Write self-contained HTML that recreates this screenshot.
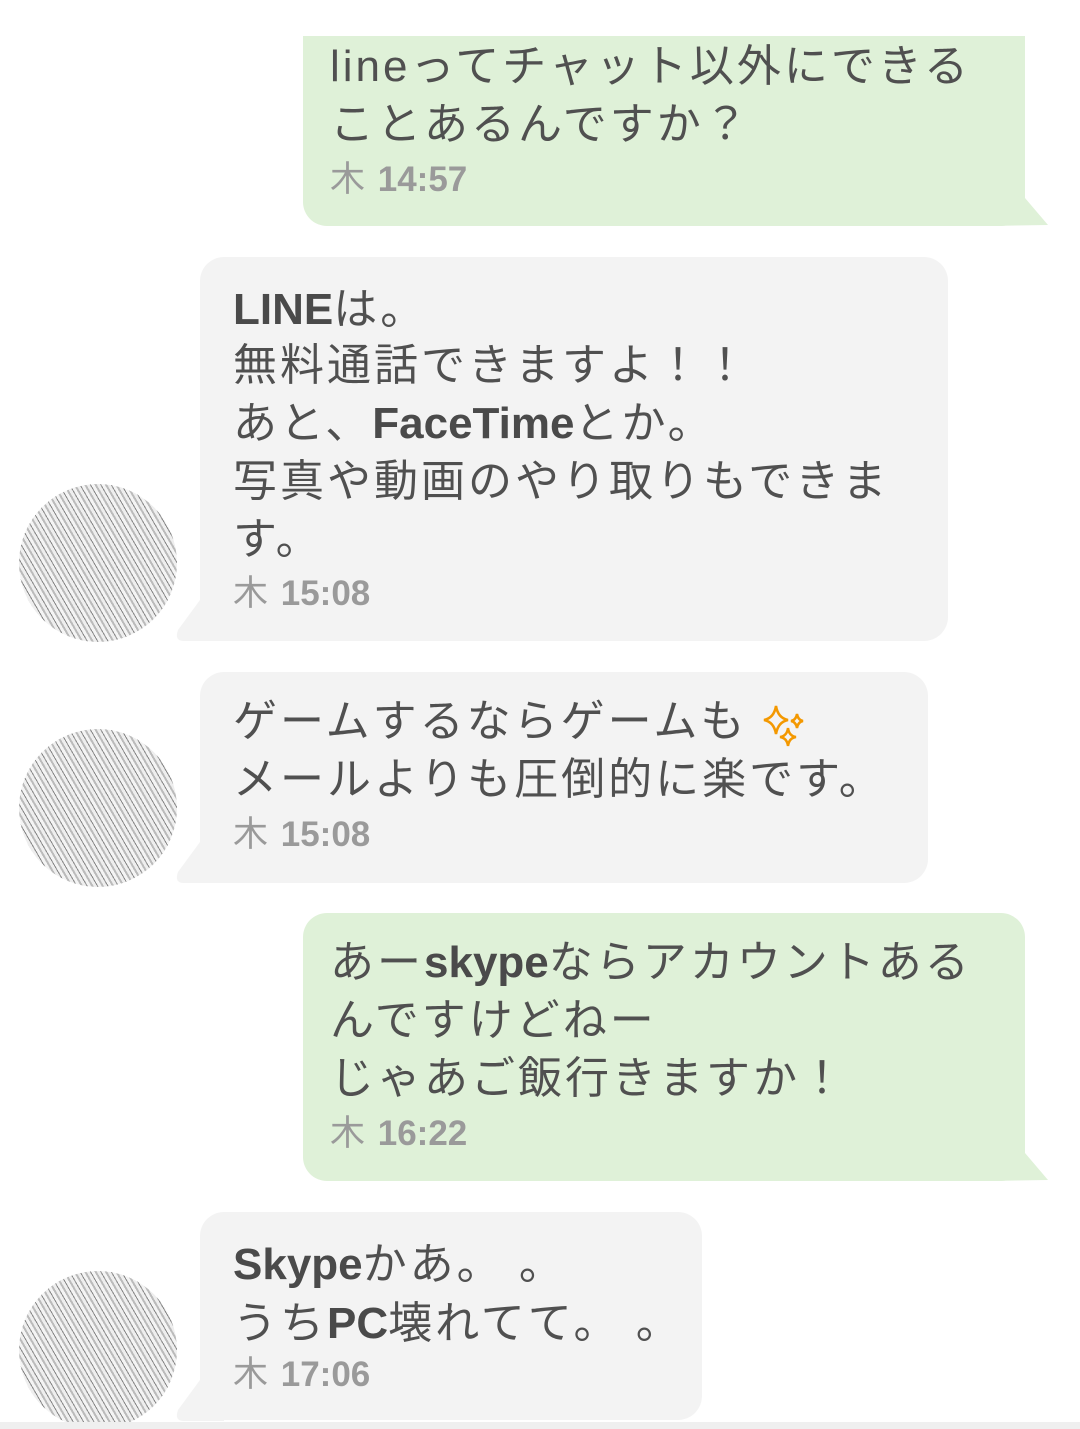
<!DOCTYPE html>
<html><head><meta charset="utf-8"><style>
body{margin:0;width:1080px;height:1429px;background:#fff;position:relative;overflow:hidden;font-family:"Liberation Sans","Noto Sans CJK JP",sans-serif;}
.b{position:absolute;}
.g{background:#dff1d8;border-radius:24px;}
.w{background:#f3f3f3;border-radius:24px;}
.t{position:absolute;font-size:44px;color:#505050;letter-spacing:3px;white-space:nowrap;line-height:58px;}
.t b{letter-spacing:0;color:#4a4a4a}
.tm{position:absolute;font-size:35px;color:#9a9a9a;white-space:nowrap;line-height:40px;font-weight:bold;}
.tm span{font-weight:normal;margin-right:3px}
.av{position:absolute;width:158px;height:158px;border-radius:50%;
background:repeating-linear-gradient(60deg,#bbb 0 2px,#eee 2px 5px,#888 5px 6px,#f4f4f4 6px 9px);}
</style></head><body>
<!-- bubble 1 -->
<div class="b g" style="left:303px;top:36px;width:722px;height:190px;border-radius:0 0 24px 24px"></div>
<svg class="b" style="left:990px;top:190px" width="60" height="37"><path d="M0 0 L35 8 L58 35 L0 36Z" fill="#dff1d8"/></svg>
<div class="t" style="left:330px;top:38px">lineってチャット以外にできる</div>
<div class="t" style="left:330px;top:96px">ことあるんですか？</div>
<div class="tm" style="left:330px;top:160px"><span>木</span> 14:57</div>

<!-- bubble 2 -->
<div class="b w" style="left:200px;top:257px;width:748px;height:384px"></div>
<svg class="b" style="left:174px;top:600px" width="50" height="42"><path d="M26 0 L4 30 Q0 41 10 41 L50 41 L50 0Z" fill="#f3f3f3"/></svg>
<div class="av" style="left:19px;top:484px"></div>
<div class="t" style="left:233px;top:281px"><b>LINE</b>は。</div>
<div class="t" style="left:233px;top:337px">無料通話できますよ！！</div>
<div class="t" style="left:233px;top:395px">あと、<b>FaceTime</b>とか。</div>
<div class="t" style="left:233px;top:453px">写真や動画のやり取りもできま</div>
<div class="t" style="left:233px;top:511px">す。</div>
<div class="tm" style="left:233px;top:574px"><span>木</span> 15:08</div>

<!-- bubble 3 -->
<div class="b w" style="left:200px;top:672px;width:728px;height:211px"></div>
<svg class="b" style="left:174px;top:842px" width="50" height="42"><path d="M26 0 L4 30 Q0 41 10 41 L50 41 L50 0Z" fill="#f3f3f3"/></svg>
<div class="av" style="left:19px;top:729px"></div>
<div class="t" style="left:233px;top:693px">ゲームするならゲームも</div>
<svg class="b" style="left:762px;top:704px" width="46" height="46"><g fill="none" stroke="#f39800" stroke-width="2.5"><path d="M14 2 Q16 14 26 16 Q16 18 14 30 Q12 18 2 16 Q12 14 14 2Z"/><path d="M26 24 Q27 32 34 33 Q27 34 26 42 Q25 34 18 33 Q25 32 26 24Z"/><path d="M35 10 Q36 16 41 17 Q36 18 35 24 Q34 18 29 17 Q34 16 35 10Z"/></g></svg>
<div class="t" style="left:233px;top:751px">メールよりも圧倒的に楽です。</div>
<div class="tm" style="left:233px;top:815px"><span>木</span> 15:08</div>

<!-- bubble 4 -->
<div class="b g" style="left:303px;top:913px;width:722px;height:268px"></div>
<svg class="b" style="left:990px;top:1145px" width="60" height="37"><path d="M0 0 L35 8 L58 35 L0 36Z" fill="#dff1d8"/></svg>
<div class="t" style="left:330px;top:934px">あー<b>skype</b>ならアカウントある</div>
<div class="t" style="left:330px;top:992px">んですけどねー</div>
<div class="t" style="left:330px;top:1050px">じゃあご飯行きますか！</div>
<div class="tm" style="left:330px;top:1114px"><span>木</span> 16:22</div>

<!-- bubble 5 -->
<div class="b w" style="left:200px;top:1212px;width:502px;height:208px"></div>
<svg class="b" style="left:174px;top:1380px" width="50" height="42"><path d="M26 0 L4 30 Q0 41 10 41 L50 41 L50 0Z" fill="#f3f3f3"/></svg>
<div class="av" style="left:19px;top:1271px"></div>
<div class="t" style="left:233px;top:1236px"><b>Skype</b>かあ。 。</div>
<div class="t" style="left:233px;top:1295px">うち<b>PC</b>壊れてて。 。</div>
<div class="tm" style="left:233px;top:1355px"><span>木</span> 17:06</div>

<div class="b" style="left:0;top:1422px;width:1080px;height:7px;background:#efefef"></div>
</body></html>
